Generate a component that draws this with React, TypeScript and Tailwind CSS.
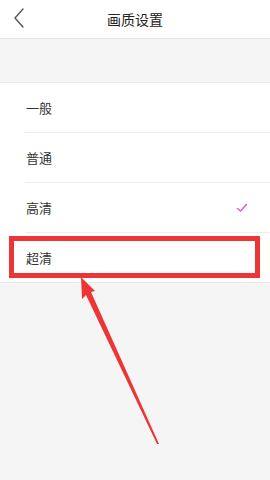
import React from "react";

const options = ["一般", "普通", "高清", "超清"];

export default function App() {
  const selected = "高清";

  return (
    <div
      className="relative w-[270px] h-[480px] bg-[#f5f5f5] overflow-hidden"
      style={{ fontFamily: '"Noto Sans CJK SC", "Noto Sans", sans-serif' }}
    >
      {/* Header */}
      <div className="h-[39px] bg-white border-b border-[#e6e6e6] flex items-center relative">
        <button className="absolute left-[12px] top-[7px] text-[#555]">
          <svg width="14" height="22" viewBox="0 0 14 22" fill="none">
            <path d="M11 2 L3 11 L11 20" stroke="#555" strokeWidth="1.4" strokeLinecap="round" strokeLinejoin="round" />
          </svg>
        </button>
        <h1 className="flex-1 text-center text-[14px] text-[#222] leading-none">画质设置</h1>
      </div>

      {/* Empty band */}
      <div className="h-[44px] bg-[#f5f5f5] border-b border-[#ececec]" />

      {/* Options list */}
      <div className="bg-white">
        {options.map((opt, i) => (
          <div key={opt} className="h-[50px] flex flex-col">
            <div className="flex-1 flex items-center justify-between pl-[26px] pr-[22px]">
              <span className="text-[13px] text-[#333]">{opt}</span>
              {opt === selected && (
                <svg width="12" height="10" viewBox="0 0 12 10" fill="none">
                  <path d="M1.5 5.5 L4.5 8 L10.5 1.5" stroke="#e060cc" strokeWidth="1.6" strokeLinecap="round" strokeLinejoin="round" />
                </svg>
              )}
            </div>
            {i < options.length - 1 ? (
              <div className="h-px bg-[#ededed] ml-[25px]" />
            ) : (
              <div className="h-px bg-[#e8e8e8]" />
            )}
          </div>
        ))}
      </div>

      {/* Annotation: red highlight box */}
      <div className="absolute left-[9px] top-[236px] w-[251px] h-[42px] border-[5px] border-[#ee3535]" />

      {/* Annotation: arrow */}
      <svg className="absolute left-0 top-0" width="270" height="480" viewBox="0 0 270 480">
        <polygon
          points="81,277 95,291 91,292 159,444 157,444 86,295 82,299"
          fill="#ee3535"
        />
      </svg>
    </div>
  );
}
